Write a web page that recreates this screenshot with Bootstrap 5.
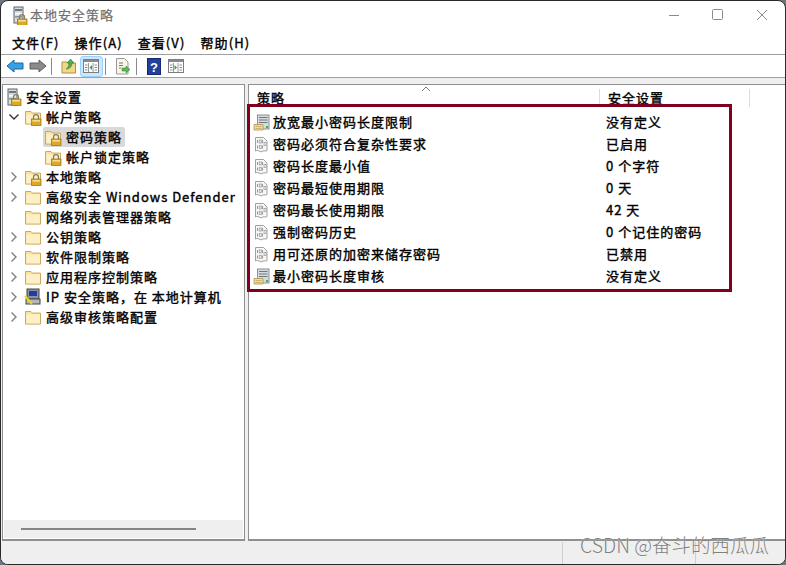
<!DOCTYPE html>
<html lang="zh">
<head>
<meta charset="utf-8">
<title>本地安全策略</title>
<link href="https://cdn.jsdelivr.net/npm/bootstrap@5.3.0/dist/css/bootstrap.min.css" rel="stylesheet">
<style>
html,body{height:100%;margin:0;background:#6b7680;overflow:hidden}
body{font-family:"Noto Sans CJK SC","Liberation Sans",sans-serif;font-size:13px;color:#000}
.lsp-win{position:relative;width:786px;height:565px;background:#fff;border:1px solid #2a2a2a;border-radius:8px;overflow:hidden;-webkit-text-stroke:.4px #000;letter-spacing:1px}
.lsp-title{height:28px;margin-bottom:2px;padding-left:9px;color:#6f6f6f;-webkit-text-stroke:.2px #6f6f6f;font-size:13px}
.lsp-title svg{margin-right:2px}
.lsp-caps{margin-left:auto;height:28px}
.lsp-cap{width:44px;height:28px;display:flex;align-items:center;justify-content:center;margin-left:0}
.lsp-menu{height:24px;padding-left:11px;gap:15px;border-bottom:1px solid #a0a0a0;font-size:13px;letter-spacing:1.1px}
.lsp-tools{height:23px;padding-left:2px;border-bottom:1px solid #a0a0a0}
.lsp-sep{width:1px;height:17px;background:#8a8a8a;margin:0 5px 0 2px}
.lsp-tbtn{width:23px;height:21px;display:flex;align-items:center;justify-content:center}
.lsp-tbtn-on{background:#cce8ff;border:1px solid #99d1ff;border-radius:3px}
.lsp-main{background:#efefef;flex:1;padding:6px 0 1px 1px;gap:3px;min-height:0}
.lsp-left{width:243px;background:#fff;border:1px solid #8f8f8f;border-bottom-width:2px;display:flex;flex-direction:column}
.lsp-tree{flex:1;padding-top:2px;white-space:nowrap;overflow:hidden}
.lsp-node{height:20px;display:flex;align-items:center;line-height:20px}
.lsp-chev{width:20px;flex:none;display:flex;justify-content:center}
.lsp-ind1,.lsp-ind0{padding-left:1px}
.lsp-ind2{padding-left:40px}
.lsp-ic{width:18px;height:18px;flex:none;margin-right:4px}
.lsp-ic2{margin-left:1px}
.lsp-sel{background:#d9d9d9;border-radius:2px;padding-right:3px;height:20px;display:flex;align-items:center}
.lsp-hbar{height:18px;background:#efefef;margin:0 1px 1px 1px;display:flex;align-items:center;padding-left:17px}
.lsp-hthumb{width:175px;height:2px;background:#858585}
.lsp-right{flex:1;background:#fff;border:1px solid #8f8f8f;border-right:0;border-bottom-width:2px;position:relative}
.lsp-head{height:22px;position:relative;overflow:hidden}
.lsp-hc{position:absolute;top:4px;height:18px;line-height:18px;padding-left:8px;border-right:1px solid #dcdcdc}
.lsp-hc1{left:0;width:351px}
.lsp-hc2{left:351px;width:150px}
.lsp-sort{left:172px;top:1px}
.lsp-list{padding-top:4px}
.lsp-row{height:22px;display:flex;align-items:center}
.lsp-name{width:351px;flex:none;display:flex;align-items:center;padding-left:4px}
.lsp-name svg{width:17px;height:17px;flex:none;margin-right:3px}
.lsp-val{padding-left:6px}
.lsp-status{height:22px;background:#efefef}
.lsp-seg1{width:562px;border-right:1px solid #cfcfcf}
.lsp-seg2{width:133px;border-right:1px solid #cfcfcf}
.lsp-redbox{position:absolute;left:246px;top:103px;width:485px;height:188px;border:3px solid #800020;pointer-events:none}
.lsp-mark{position:absolute;left:579px;top:531px;font-size:19.5px;line-height:26px;color:#7f7f7f;letter-spacing:0;-webkit-text-stroke:0;font-weight:300;white-space:nowrap;text-shadow:0 0 1px #fff}
</style>
</head>
<body>
<svg width="0" height="0" class="position-absolute">
<defs>
<symbol id="s-lock" viewBox="0 0 18 18">
<path d="M9.500 11V9.200a2.500 2.500 0 0 1 5 0V11" fill="none" stroke="#85805f" stroke-width="1.300"/>
<rect x="7.500" y="11" width="9.500" height="6.500" fill="#dca828" stroke="#94700f" stroke-width=".7"/>
<rect x="8.500" y="12" width="7.500" height="1.600" fill="#f6dc8c"/>
</symbol>
<symbol id="s-folder" viewBox="0 0 18 18">
<path d="M1.500 3.500h5.500l1.500 1.600h8v11H1.500z" fill="#fbe3a0" stroke="#c9a95e" stroke-width="1"/>
<path d="M2.500 6.500h13.500v8.800H2.500z" fill="#fdf0c6"/>
</symbol>
<symbol id="s-server" viewBox="0 0 18 18">
<rect x="4" y="1" width="9" height="16" fill="#d7dbdf" stroke="#5f6770" stroke-width="1"/>
<rect x="5" y="3" width="7" height="2" fill="#6d757d"/>
<rect x="5" y="7" width="7" height="1.500" fill="#fff"/>
<rect x="5" y="10" width="7" height="1.500" fill="#8a9198"/>
</symbol>
<symbol id="s-pol" viewBox="0 0 17 17">
<path d="M2.500 1.500h8l3.500 3.500v9.500c-1.500 1.500-2.500-.5-4 .5s-2.500 1-4 0-2.500-.5-3.500 0z" fill="#f7f7f7" stroke="#a0a0a0"/>
<path d="M4.500 4v3M9.500 4v3M4.500 9.500v3M9.500 9.500v3" stroke="#9a9a9a" stroke-width="1.100"/>
<rect x="6.300" y="4" width="2" height="3" fill="none" stroke="#a6a6a6" stroke-width=".9"/>
<rect x="11" y="6.500" width="2" height="3" fill="none" stroke="#a6a6a6" stroke-width=".9"/>
<rect x="6.300" y="9.500" width="2" height="3" fill="none" stroke="#a6a6a6" stroke-width=".9"/>
</symbol>
<symbol id="s-pol2" viewBox="0 0 17 17">
<rect x="4.500" y="1" width="11.500" height="14" fill="#d6dcdf" stroke="#6f7a80" stroke-width=".8"/>
<path d="M6 3.500h8.500M6 6h8.500M6 8.500h8.500" stroke="#6d777d" stroke-width="1.200"/>
<rect x="13" y="12" width="2" height="2" fill="#3fb04a"/>
<path d="M1 10.500h9v5.500H1z" fill="#f3dc9b" stroke="#ad9356" stroke-width=".8"/>
<path d="M2.500 12.500h6M2.500 14.500h6" stroke="#c5a85f" stroke-width=".8"/>
</symbol>
<symbol id="s-chr" viewBox="0 0 10 12"><path d="M2.500 1.500 7 6l-4.500 4.500" fill="none" stroke="#7f7f7f" stroke-width="1.400"/></symbol>
<symbol id="s-chd" viewBox="0 0 12 10"><path d="M1.500 2.500 6 7l4.500-4.500" fill="none" stroke="#333" stroke-width="1.400"/></symbol>
</defs>
</svg>
<div class="lsp-win d-flex flex-column">
  <div class="lsp-title d-flex align-items-center">
    <svg width="18" height="20" viewBox="0 0 18 20"><use href="#s-server"/><use href="#s-lock" y="2"/></svg>
    <span>本地安全策略</span>
    <div class="lsp-caps d-flex">
      <div class="lsp-cap"><svg width="12" height="12"><path d="M1 6.500h10" stroke="#8a8a8a"/></svg></div>
      <div class="lsp-cap"><svg width="12" height="12"><rect x=".5" y=".5" width="10" height="10" rx="1" fill="none" stroke="#8a8a8a"/></svg></div>
      <div class="lsp-cap"><svg width="12" height="12"><path d="M1 1l10 10M11 1 1 11" stroke="#8a8a8a"/></svg></div>
    </div>
  </div>
  <div class="lsp-menu d-flex align-items-center">
    <span>文件(F)</span><span>操作(A)</span><span>查看(V)</span><span>帮助(H)</span>
  </div>
  <div class="lsp-tools d-flex align-items-center">
    <div class="lsp-tbtn"><svg width="18" height="14" viewBox="0 0 18 14"><path d="M1 7 8 1v3h9v6H8v3z" fill="#3aa0e6" stroke="#1768a8"/></svg></div>
    <div class="lsp-tbtn"><svg width="18" height="14" viewBox="0 0 18 14"><path d="M17 7l-7-6v3H1v6h9v3z" fill="#8a8a8a" stroke="#5e5e5e"/></svg></div>
    <div class="lsp-sep"></div>
    <div class="lsp-tbtn"><svg width="16" height="16" viewBox="0 0 16 16"><path d="M1 4h5l1 1h7.500v10H1z" fill="#f3d68c" stroke="#b2913f"/><path d="M5 11c2-1 3-3 3-6H6l3.500-4L13 5h-2c0 3-2 6-6 6z" fill="#4bb04f" stroke="#2f7d33" stroke-width=".6"/></svg></div>
    <div class="lsp-tbtn lsp-tbtn-on"><svg width="17" height="15" viewBox="0 0 17 15"><rect x=".5" y=".5" width="15" height="13" fill="#fff" stroke="#7d7d7d"/><rect x="1" y="1" width="14" height="2" fill="#8a8a8a"/><path d="M5.500 4v9M10 4v9" stroke="#9a9a9a"/><path d="M2 6h2.500M2 8.500h2.500M2 11h2.500M11.500 6H14M11.500 8.500H14M11.500 11H14" stroke="#8a8a8a"/><path d="M9 6v5L6.500 8.500z" fill="#2ca24a"/></svg></div>
    <div class="lsp-sep"></div>
    <div class="lsp-tbtn"><svg width="17" height="17" viewBox="0 0 17 17"><path d="M2.500.5h8l3.500 3.500v12h-11.500z" fill="#fbf6e3" stroke="#9a9a9a"/><path d="M5 5h4M5 7.500h4M5 10h2" stroke="#777"/><path d="M8 10h4V8l4 3.500-4 3.500v-2H8z" fill="#58b85a" stroke="#3a8a3c" stroke-width=".6"/></svg></div>
    <div class="lsp-sep"></div>
    <div class="lsp-tbtn"><svg width="14" height="17" viewBox="0 0 14 17"><rect x=".5" y=".5" width="13" height="16" fill="#22409c" stroke="#142a70"/><text x="7" y="13.500" text-anchor="middle" font-family="Liberation Sans" font-size="13" font-weight="700" fill="#fff" stroke="none" letter-spacing="0">?</text></svg></div>
    <div class="lsp-tbtn"><svg width="17" height="15" viewBox="0 0 17 15"><rect x=".5" y=".5" width="15" height="13" fill="#fff" stroke="#7d7d7d"/><rect x="1" y="1" width="14" height="2" fill="#8a8a8a"/><path d="M5.500 4v9M10 4v9" stroke="#9a9a9a"/><path d="M2 6h2.500M2 8.500h2.500M2 11h2.500M11.500 6H14M11.500 8.500H14M11.500 11H14" stroke="#8a8a8a"/><path d="M6.500 6v5L9 8.500z" fill="#2ca24a"/></svg></div>
  </div>
  <div class="lsp-main d-flex">
    <div class="lsp-left">
      <div class="lsp-tree">
        <div class="lsp-node lsp-ind0"><svg class="lsp-ic"><use href="#s-server"/><use href="#s-lock"/></svg><span>安全设置</span></div>
        <div class="lsp-node lsp-ind1"><span class="lsp-chev"><svg width="12" height="10"><use href="#s-chd"/></svg></span><svg class="lsp-ic"><use href="#s-folder"/><use href="#s-lock"/></svg><span>帐户策略</span></div>
        <div class="lsp-node lsp-ind2"><div class="lsp-sel"><svg class="lsp-ic lsp-ic2"><use href="#s-folder"/><use href="#s-lock"/></svg><span>密码策略</span></div></div>
        <div class="lsp-node lsp-ind2"><svg class="lsp-ic lsp-ic2"><use href="#s-folder"/><use href="#s-lock"/></svg><span>帐户锁定策略</span></div>
        <div class="lsp-node lsp-ind1"><span class="lsp-chev"><svg width="10" height="12"><use href="#s-chr"/></svg></span><svg class="lsp-ic"><use href="#s-folder"/><use href="#s-lock"/></svg><span>本地策略</span></div>
        <div class="lsp-node lsp-ind1"><span class="lsp-chev"><svg width="10" height="12"><use href="#s-chr"/></svg></span><svg class="lsp-ic"><use href="#s-folder"/></svg><span>高级安全 Windows Defender</span></div>
        <div class="lsp-node lsp-ind1"><span class="lsp-chev"></span><svg class="lsp-ic"><use href="#s-folder"/></svg><span>网络列表管理器策略</span></div>
        <div class="lsp-node lsp-ind1"><span class="lsp-chev"><svg width="10" height="12"><use href="#s-chr"/></svg></span><svg class="lsp-ic"><use href="#s-folder"/></svg><span>公钥策略</span></div>
        <div class="lsp-node lsp-ind1"><span class="lsp-chev"><svg width="10" height="12"><use href="#s-chr"/></svg></span><svg class="lsp-ic"><use href="#s-folder"/></svg><span>软件限制策略</span></div>
        <div class="lsp-node lsp-ind1"><span class="lsp-chev"><svg width="10" height="12"><use href="#s-chr"/></svg></span><svg class="lsp-ic"><use href="#s-folder"/></svg><span>应用程序控制策略</span></div>
        <div class="lsp-node lsp-ind1"><span class="lsp-chev"><svg width="10" height="12"><use href="#s-chr"/></svg></span><svg class="lsp-ic" viewBox="0 0 18 18"><rect x="3" y="1" width="12" height="10" fill="#8c94a0" stroke="#444"/><rect x="5" y="3" width="8" height="5" fill="#2438a8"/><rect x="2" y="11" width="14" height="5" fill="#b4b8bc" stroke="#444"/><path d="M1 8l7 8" stroke="#e8d820" stroke-width="2"/></svg><span>IP 安全策略，在 本地计算机</span></div>
        <div class="lsp-node lsp-ind1"><span class="lsp-chev"><svg width="10" height="12"><use href="#s-chr"/></svg></span><svg class="lsp-ic"><use href="#s-folder"/></svg><span>高级审核策略配置</span></div>
      </div>
      <div class="lsp-hbar"><div class="lsp-hthumb"></div></div>
    </div>
    <div class="lsp-right">
      <div class="lsp-head">
        <div class="lsp-hc lsp-hc1">策略</div>
        <div class="lsp-hc lsp-hc2">安全设置</div>
        <svg class="position-absolute lsp-sort" width="10" height="6"><path d="M1 5l4-4 4 4" fill="none" stroke="#777"/></svg>
      </div>
      <div class="lsp-list">
        <div class="lsp-row"><div class="lsp-name"><svg><use href="#s-pol2"/></svg>放宽最小密码长度限制</div><div class="lsp-val">没有定义</div></div>
        <div class="lsp-row"><div class="lsp-name"><svg><use href="#s-pol"/></svg>密码必须符合复杂性要求</div><div class="lsp-val">已启用</div></div>
        <div class="lsp-row"><div class="lsp-name"><svg><use href="#s-pol"/></svg>密码长度最小值</div><div class="lsp-val">0 个字符</div></div>
        <div class="lsp-row"><div class="lsp-name"><svg><use href="#s-pol"/></svg>密码最短使用期限</div><div class="lsp-val">0 天</div></div>
        <div class="lsp-row"><div class="lsp-name"><svg><use href="#s-pol"/></svg>密码最长使用期限</div><div class="lsp-val">42 天</div></div>
        <div class="lsp-row"><div class="lsp-name"><svg><use href="#s-pol"/></svg>强制密码历史</div><div class="lsp-val">0 个记住的密码</div></div>
        <div class="lsp-row"><div class="lsp-name"><svg><use href="#s-pol"/></svg>用可还原的加密来储存密码</div><div class="lsp-val">已禁用</div></div>
        <div class="lsp-row"><div class="lsp-name"><svg><use href="#s-pol2"/></svg>最小密码长度审核</div><div class="lsp-val">没有定义</div></div>
      </div>
    </div>
  </div>
  <div class="lsp-status d-flex"><div class="lsp-seg1"></div><div class="lsp-seg2"></div></div>
  <div class="lsp-redbox"></div>
  <div class="lsp-mark">CSDN @奋斗的西瓜瓜</div>
</div>
<script src="https://cdn.jsdelivr.net/npm/bootstrap@5.3.0/dist/js/bootstrap.bundle.min.js"></script>
</body>
</html>
